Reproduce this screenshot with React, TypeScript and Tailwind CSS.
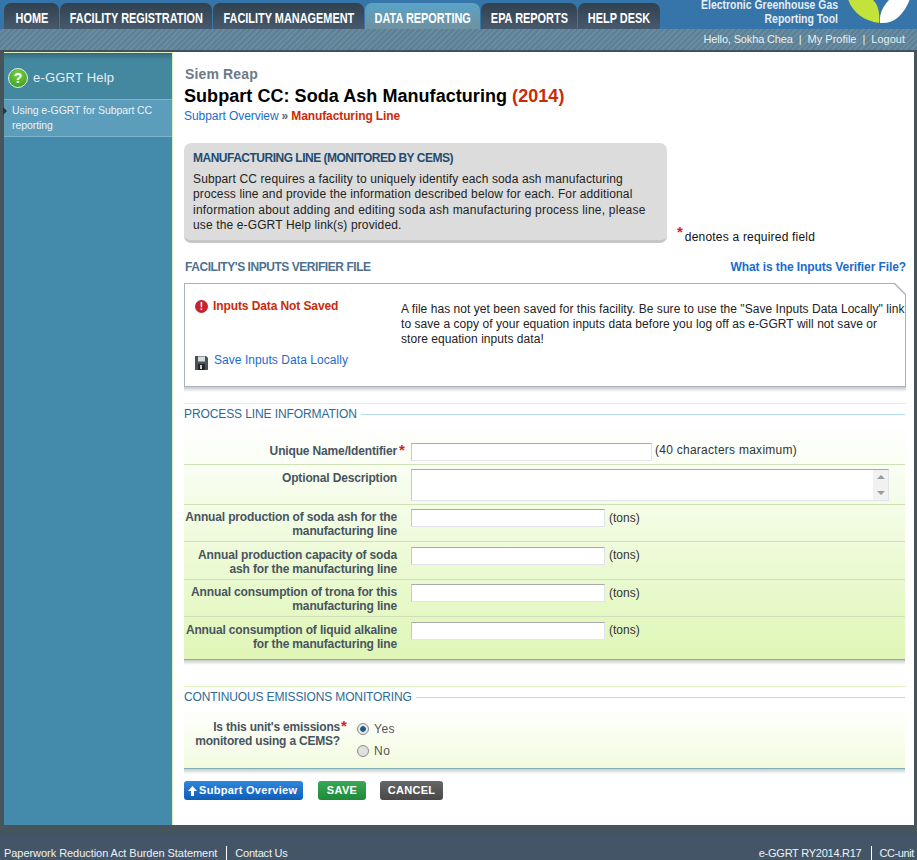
import React from 'react';

const tabs = [
  { label: 'HOME', width: 'w-[55px]' },
  { label: 'FACILITY REGISTRATION', width: 'w-[152px]' },
  { label: 'FACILITY MANAGEMENT', width: 'w-[151px]' },
  { label: 'DATA REPORTING', width: 'w-[115px]', active: true },
  { label: 'EPA REPORTS', width: 'w-[96px]' },
  { label: 'HELP DESK', width: 'w-[82px]' },
];

const numberRows = [
  { lines: ['Annual production of soda ash for the', 'manufacturing line'], height: 'h-[37px]', label: 'pt-[5px]', field: 'pt-[4px]', unit: 'pt-[2px]' },
  { lines: ['Annual production capacity of soda', 'ash for the manufacturing line'], height: 'h-[38px]', label: 'pt-[6px]', field: 'pt-[5px]', unit: 'pt-[1px]' },
  { lines: ['Annual consumption of trona for this', 'manufacturing line'], height: 'h-[37px]', label: 'pt-[5px]', field: 'pt-[4px]', unit: 'pt-[2px]' },
  { lines: ['Annual consumption of liquid alkaline', 'for the manufacturing line'], height: 'h-[42px]', label: 'pt-[6px]', field: 'pt-[5px]', unit: 'pt-[1px]' },
];

const inputClass =
  'block h-[18px] bg-white border border-[#e3e3ec] border-t-[#a9a9a9] border-l-[#c8c8c8] outline-none';

const Star = ({ className }: { className: string }) => (
  <span className={`font-bold text-[#e01b1b] text-[15px] leading-none ${className}`}>*</span>
);

const SectionTitle = ({ title, tracking }: { title: string; tracking: string }) => (
  <div className="border-t border-[#e3f3c0] flex items-center gap-[4px] h-[21px]">
    <span className={`text-[12px] leading-[14px] text-[#2d6a94] whitespace-nowrap ${tracking}`}>{title}</span>
    <span className="flex-1 h-px bg-[#b5dcef] mr-px" />
  </div>
);

const App = () => {
  return (
    <div className="h-[860px] w-full overflow-hidden bg-[#46555c] flex flex-col font-['Liberation_Sans',Arial,sans-serif] text-[12px]">
      {/* Top band */}
      <div className="h-[29px] bg-[#3675aa] flex pl-1 pt-[3px] shrink-0 overflow-hidden">
        <div className="flex gap-px">
          {tabs.map((tab) => (
            <a
              key={tab.label}
              className={`${tab.width} h-[26px] rounded-t-[7px] flex items-center justify-center text-white font-bold text-[14px] pt-[4px] whitespace-nowrap ${
                tab.active
                  ? 'bg-gradient-to-b from-[#58a3c8] to-[#6e919f]'
                  : 'bg-gradient-to-b from-[#30414f] to-[#47596c]'
              }`}
            >
              <span className="inline-block scale-x-[.78]">{tab.label}</span>
            </a>
          ))}
        </div>
        <div className="ml-auto flex -mt-[3px]">
          <div className="text-[#e4edf3] font-bold text-[12px] leading-[10px] whitespace-nowrap mr-[9px] origin-right scale-x-[.87] w-[136px] flex flex-col items-end gap-[4px]">
            <div>Electronic Greenhouse Gas</div>
            <div>Reporting Tool</div>
          </div>
          <svg width="70" height="29" viewBox="0 0 70 29" className="shrink-0">
            <path d="M1 -1 C5 12 17 21 32 23 C33 12 31 4 25 -1 Z" fill="#c3e23a" />
            <path d="M33 23 C48 24 57 14 63 -1 L43 -1 C36 6 32 14 33 23 Z" fill="#ffffff" />
          </svg>
        </div>
      </div>

      {/* Hatched bar with the user links */}
      <div className="h-[23px] shrink-0 border-b-2 border-[#3f525e] bg-[repeating-linear-gradient(135deg,#5b8097_0px,#5b8097_2px,#688b9d_2px,#688b9d_4px)] flex items-center justify-end pr-[12px] gap-[6px] text-[11px] text-[#e8f0f5]">
        <span className="tracking-[-0.15px]">Hello, Sokha Chea</span>
        <span>|</span>
        <span>My Profile</span>
        <span>|</span>
        <span>Logout</span>
      </div>

      {/* Body */}
      <div className="h-[773px] shrink-0 flex pl-1 pr-[3px]">
        <aside className="w-[169px] shrink-0 bg-[#438aab] border-r border-[#dcefc0] border-t border-t-[#dcefc0] flex flex-col">
          <div className="h-[46px] shrink-0 flex items-center pl-[4px] pt-[4px] gap-[5px] text-[14px] bg-gradient-to-b from-[#36697f] from-0% via-[#44889f] via-15% to-[#44889f]">
            <span className="w-[20px] h-[20px] rounded-full border border-[#e8f0e8] bg-[radial-gradient(circle_at_50%_30%,#7fd04a,#2f9a1a)] flex items-center justify-center text-white font-bold text-[14px] leading-none">
              ?
            </span>
            <span className="text-[#e4f0f5] tracking-[0.2px] text-[13px]">e-GGRT Help</span>
          </div>
          <div className="relative h-[38px] shrink-0 bg-[#5b9dbb] border-y border-[#7db4cd] pl-2 pt-[3px] text-[10.5px] leading-[15px] text-[#eaf3f7] tracking-[-0.07px]">
            <span className="absolute -left-px top-[7px] border-y-[4px] border-y-transparent border-l-[4px] border-l-[#28343a]" />
            Using e-GGRT for Subpart CC reporting
          </div>
        </aside>

        <main className="w-[741px] shrink-0 bg-white pl-[11px] pr-[8px]">
          <div className="pt-[15px] text-[14px] leading-[15px] font-bold text-[#6c7a89] tracking-[0.15px] pl-px">Siem Reap</div>
          <h1 className="mt-[3px] text-[18px] leading-[22px] font-bold text-black tracking-[0.05px]">
            Subpart CC: Soda Ash Manufacturing <span className="text-[#cc2a08]">(2014)</span>
          </h1>
          <div className="mt-[2px] text-[12px] leading-[14px] flex gap-[3px]">
            <a className="text-[#1a6dcc] tracking-[-0.05px]">Subpart Overview</a>
            <span className="font-bold text-[#5c6670]">»</span>
            <span className="font-bold text-[#cc2a08] tracking-[-0.1px]">Manufacturing Line</span>
          </div>

          <div className="mt-[20px] flex items-end">
            <div className="w-[483px] h-[100px] shrink-0 rounded-[7px] bg-[#dcdcdc] border-b-[3px] border-[#c6c6c6] pl-[9px] pr-2 pt-[8px] whitespace-nowrap">
              <div className="font-bold text-[12px] leading-[15px] text-[#1f4c70] tracking-[-0.5px]">MANUFACTURING LINE (MONITORED BY CEMS)</div>
              <p className="mt-[6px] text-[12px] leading-[15.4px] text-[#222] tracking-[0.13px]">
                Subpart CC requires a facility to uniquely identify each soda ash manufacturing<br />
                process line and provide the information described below for each. For additional<br />
                <span className="tracking-[0.22px]">information about adding and editing soda ash manufacturing process line, please</span><br />
                use the e-GGRT Help link(s) provided.
              </p>
            </div>
            <div className="flex pl-[10px] -mb-px text-[12px] leading-[14px] text-[#111]">
              <Star className="-mt-[6px] mr-[2px]" />
              <span className="tracking-[0.2px]">denotes a required field</span>
            </div>
          </div>

          <div className="mt-[17px] flex justify-between items-center h-[14px]">
            <span className="font-bold text-[12px] text-[#4f7090] tracking-[-0.45px] pl-px">FACILITY'S INPUTS VERIFIER FILE</span>
            <a className="font-bold text-[12px] text-[#1a6dcc] tracking-[-0.1px]">What is the Inputs Verifier File?</a>
          </div>

          <div className="mt-[9px] h-[104px] [clip-path:polygon(0_0,calc(100%-11px)_0,100%_11px,100%_100%,0_100%)] bg-[#aab2bf] p-px">
            <div className="h-full bg-white [clip-path:polygon(0_0,calc(100%-11px)_0,100%_11px,100%_100%,0_100%)] flex relative whitespace-nowrap">
              <div className="w-[216px] shrink-0 pl-[10px] pt-[14px]">
                <div className="flex items-center gap-[5px] h-[16px]">
                  <span className="w-[13px] h-[13px] rounded-full bg-[#c8232c] text-white font-bold text-[10px] leading-[13px] text-center">!</span>
                  <span className="font-bold text-[12px] text-[#cc2a08] tracking-[-0.1px]">Inputs Data Not Saved</span>
                </div>
                <div className="mt-[39px] flex gap-[6px]">
                  <svg width="13" height="14" viewBox="0 0 13 14" className="mt-[3px] shrink-0">
                    <path d="M0 0H11L13 2V14H0Z" fill="#4a5257" />
                    <rect x="3" y="0.5" width="7" height="5" fill="#d8dde0" />
                    <rect x="3" y="8" width="7" height="6" fill="#20262a" />
                    <rect x="5" y="9" width="2" height="4" fill="#c8ced2" />
                  </svg>
                  <a className="text-[12px] leading-[14px] text-[#1a6dcc] tracking-[0.05px]">Save Inputs Data Locally</a>
                </div>
              </div>
              <div className="pt-[18px] text-[12px] leading-[15px] text-[#222] tracking-[0.05px]">
                A file has not yet been saved for this facility. Be sure to use the "Save Inputs Data Locally" link<br />
                to save a copy of your equation inputs data before you log off as e-GGRT will not save or<br />
                store equation inputs data!
              </div>
            </div>
          </div>
          <div className="h-[5px] bg-gradient-to-b from-[#c4c8cc] to-white" />

          <div className="mt-[11px]">
            <SectionTitle title="PROCESS LINE INFORMATION" tracking="tracking-[-0.1px]" />
          </div>
          <div className="mr-px bg-gradient-to-b from-white to-[#dff6b6] border-b border-[#7fb0b8] text-[12px] font-bold text-[#48545f] tracking-[-0.15px] pt-[16px]">
            <div className="h-[25px] flex border-b border-[#cfe0b4]">
              <div className="w-[213px] shrink-0 text-right pt-[4px] leading-[14px]">Unique Name/Identifier</div>
              <Star className="w-[14px] pl-[2px] pt-[2px]" />
              <div className="pt-[3px] flex gap-[3px]">
                <input className={`${inputClass} w-[241px]`} />
                <span className="font-normal text-[#333] leading-[14px] tracking-[0.26px]">(40 characters maximum)</span>
              </div>
            </div>
            <div className="h-[40px] flex border-b border-[#cfe0b4]">
              <div className="w-[213px] shrink-0 text-right pt-[6px] leading-[14px]">Optional Description</div>
              <div className="ml-[14px] pt-[4px] relative">
                <textarea className="block w-[478px] h-[32px] resize-none bg-white border border-[#e3e3ec] border-t-[#a9a9a9] border-l-[#c8c8c8] outline-none" />
                <div className="absolute right-px top-[5px] w-[15px] h-[30px] bg-[#f1f1f1] flex flex-col items-center justify-between py-[5px]">
                  <span className="border-x-[4px] border-x-transparent border-b-[4px] border-b-[#9a9a9a]" />
                  <span className="border-x-[4px] border-x-transparent border-t-[4px] border-t-[#9a9a9a]" />
                </div>
              </div>
            </div>
            {numberRows.map((row, i) => (
              <div key={row.lines[0]} className={`${row.height} flex ${i < numberRows.length - 1 ? 'border-b border-[#cfe0b4]' : ''}`}>
                <div className={`w-[213px] shrink-0 text-right ${row.label} leading-[14px] whitespace-nowrap`}>
                  {row.lines[0]}
                  <br />
                  {row.lines[1]}
                </div>
                <div className={`ml-[14px] ${row.field} flex gap-[3px]`}>
                  <input className={`${inputClass} w-[194px]`} />
                  <span className={`font-normal text-[#333] leading-[14px] pl-[1px] ${row.unit} tracking-normal`}>(tons)</span>
                </div>
              </div>
            ))}
          </div>
          <div className="mr-px h-[5px] bg-gradient-to-b from-[#c8cccc] to-white" />

          <div className="mt-[21px]">
            <SectionTitle title="CONTINUOUS EMISSIONS MONITORING" tracking="tracking-[-0.13px]" />
          </div>
          <div className="mr-px h-[62px] bg-gradient-to-b from-white to-[#f3fbdf] border-b border-[#7fb0b8] flex text-[12px] pt-[13px]">
            <div className="w-[156px] shrink-0 text-right font-bold text-[#48545f] leading-[14px] whitespace-nowrap tracking-[-0.2px]">
              Is this unit's emissions
              <br />
              monitored using a CEMS?
            </div>
            <Star className="w-[22px] pl-px -mt-[2px]" />
            <div className="-ml-[5px] pt-[2px] flex flex-col gap-[8px] text-[#555] tracking-[0.5px]">
              <label className="flex items-center gap-[5px] leading-[14px]">
                <input
                  type="radio"
                  name="cems"
                  defaultChecked
                  className="appearance-none w-3 h-3 rounded-full border border-[#8c8c8c] bg-[#e8e8e8] checked:bg-[radial-gradient(circle,#1c5a88_0,#1c5a88_35%,#e8e8e8_45%)]"
                />
                Yes
              </label>
              <label className="flex items-center gap-[5px] leading-[14px]">
                <input type="radio" name="cems" className="appearance-none w-3 h-3 rounded-full border border-[#8c8c8c] bg-[#e0e0e0]" />
                No
              </label>
            </div>
          </div>
          <div className="mr-px h-[5px] bg-gradient-to-b from-[#c8cccc] to-white" />

          <div className="mt-[7px] flex gap-[15px] text-[11px] font-bold text-white tracking-[0.3px]">
            <button className="w-[119px] h-[19px] rounded-[3px] bg-gradient-to-b from-[#2f86dc] to-[#0f5db8] flex items-center pl-[4px] gap-[2px]">
              <svg width="9" height="10" viewBox="0 0 9 10">
                <path d="M4.5 0L9 5H6V10H3V5H0Z" fill="#fff" />
              </svg>
              Subpart Overview
            </button>
            <button className="w-[48px] h-[19px] rounded-[3px] bg-gradient-to-b from-[#38a853] to-[#1f8a3a]">SAVE</button>
            <button className="w-[63px] h-[19px] rounded-[3px] bg-gradient-to-b from-[#666] to-[#484848] -ml-px">CANCEL</button>
          </div>
        </main>
      </div>

      {/* Footer */}
      <div className="flex-1 mt-[9px] bg-[#435567] flex items-end justify-between pl-1 pr-[3px] text-[11px] leading-[14px] text-[#eef2f5]">
        <div className="flex">
          <span className="pr-[9px] border-r border-white tracking-[-0.05px]">Paperwork Reduction Act Burden Statement</span>
          <span className="pl-[8px] tracking-[-0.2px]">Contact Us</span>
        </div>
        <div className="flex">
          <span className="pr-[9px] border-r border-white tracking-[-0.25px]">e-GGRT RY2014.R17</span>
          <span className="pl-[8px] tracking-[-0.4px]">CC-unit</span>
        </div>
      </div>
    </div>
  );
};

export default App;
